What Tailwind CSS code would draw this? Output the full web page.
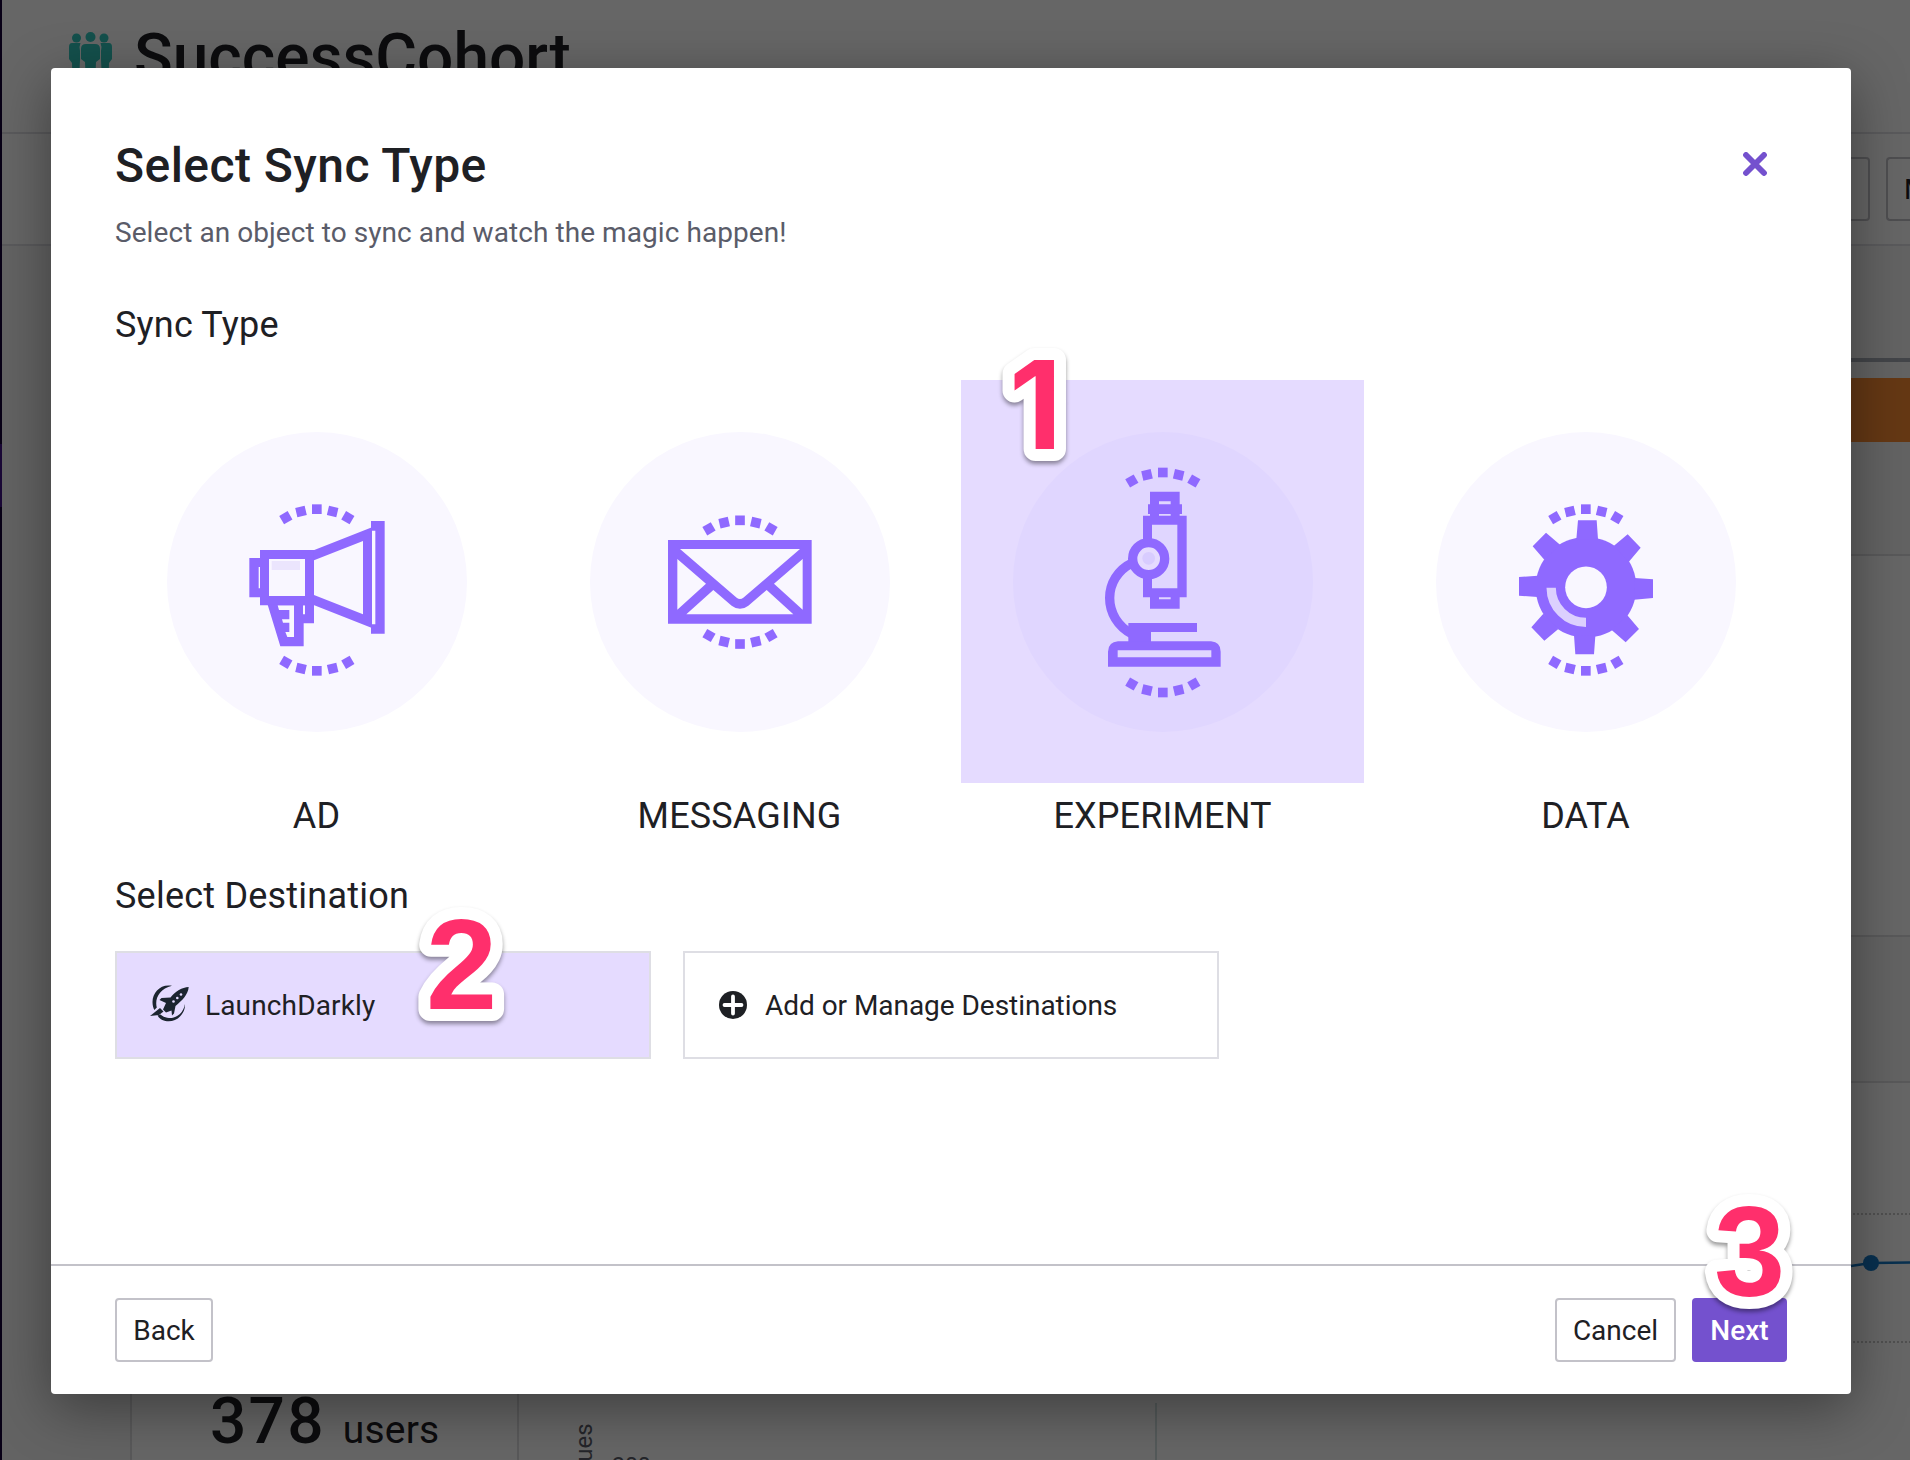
<!DOCTYPE html>
<html lang="en">
<head>
<meta charset="utf-8">
<title>Select Sync Type</title>
<script src="https://cdn.jsdelivr.net/npm/@tailwindcss/browser@4"></script>
</head>
<body class="relative h-[1460px] w-[1910px] overflow-hidden bg-[#f7f7f8] font-[Roboto,sans-serif] text-[#1e2024]">

<!-- Cohort page behind the dialog -->
<div class="flex h-[1460px]">
  <nav class="w-[2px] shrink-0 bg-[#140037] pt-[444px]"><div class="h-[63px] bg-[#421488]"></div></nav>
  <main class="flex min-w-0 flex-1 flex-col">
    <header class="flex h-[134px] shrink-0 items-start gap-[22px] border-b-2 border-[#e2e2e6] bg-white pl-[67px]">
      <svg class="mt-8 h-[52px] w-[43px] fill-[#32c8be]" viewBox="0 0 43 52">
        <circle cx="7.500" cy="6" r="4.500"/><circle cx="21.500" cy="5" r="5"/><circle cx="35" cy="6" r="4.500"/>
        <path d="M3 11h8.500q-1.500 3-.5 8v9l-1 20H3.500L3 31 0 27V15q0-4 3-4ZM31.500 11H40q3 0 3 4v12l-3 4-.5 17H33l-1-20v-9q1-5-.5-8ZM17 12h9q5 0 5 5v10l-4 3-1 22h-9l-1-22-4-3V17q0-5 5-5Z"/>
      </svg>
      <h1 class="mt-[22px] text-[64px] leading-[72px] font-medium">SuccessCohort</h1>
    </header>
    <div class="flex h-[112px] shrink-0 items-start justify-end gap-4 overflow-hidden border-b-2 border-[#e2e2e6] bg-white pt-[23px]">
      <div class="h-16 w-[120px] rounded border-2 border-[#c3c2c9]"></div>
      <div class="h-16 w-6 overflow-hidden rounded rounded-r-none border-2 border-r-0 border-[#c3c2c9] pl-4 text-[28px] leading-[61px]">More</div>
    </div>
    <div class="flex flex-1 flex-col pl-[128px]">
      <div class="mt-[112px] h-1 bg-[#a8acb6]"></div>
      <div class="mt-4 h-16 bg-[#fd8c32]"></div>
      <div class="mt-[112px] flex flex-1 flex-col border-t-2 border-l-2 border-[#dedee2] bg-white">
        <div class="h-[379px] shrink-0"></div>
        <div class="h-[148px] shrink-0 border-y-2 border-[#dedee2] bg-[#f7f7f8]"></div>
        <div class="flex flex-1">
          <div class="flex w-[387px] items-end border-r-2 border-[#dedee2] pb-[6px] pl-[78px]">
            <div class="flex items-baseline gap-[17px]"><span class="text-[64px] leading-[64px] font-medium tracking-[2.2px]">378</span><span class="text-[39px] leading-[44px] tracking-[0.2px]">users</span></div>
          </div>
          <div class="relative flex-1">
            <svg class="absolute inset-0 h-full w-full" viewBox="0 0 1391 377" preserveAspectRatio="xMinYMin slice">
              <path d="M1334 131H1391M1334 259H1391" stroke="#c8c8c8" stroke-width="2" stroke-dasharray="2 2"/>
              <path d="M637 320V377" stroke="#d2e0e2" stroke-width="2"/>
              <path d="M1325 184 1352 180 1391 179.500" stroke="#1478c6" stroke-width="2.500" fill="none"/>
              <circle cx="1352" cy="180" r="8" fill="#1478c6"/>
              <text transform="translate(73 427) rotate(-90)" font-size="24" fill="#5a5c69">Uniques</text>
              <text x="93" y="391" font-size="23" fill="#5a5c69">200</text>
            </svg>
          </div>
        </div>
      </div>
    </div>
  </main>
</div>

<!-- Overlay and dialog -->
<div class="absolute inset-0 bg-black/60 pt-[68px] pl-[51px]">
  <section class="flex h-[1326px] w-[1800px] flex-col rounded-[4px] bg-white shadow-[0_14px_56px_rgba(0,0,0,0.4)]">
    <div class="flex-1 px-16 pt-[70px]">
      <div class="flex items-start justify-between pr-5">
        <h2 class="text-[48px] leading-[56px] font-medium tracking-[0.45px]">Select Sync Type</h2>
        <svg class="mt-[14px] h-6 w-6" viewBox="0 0 24 24" fill="none" stroke="#7451ce" stroke-width="5.800" stroke-linecap="round"><path d="M3 3 21 21M21 3 3 21"/></svg>
      </div>
      <p class="mt-[19px] text-[28px] leading-10 tracking-[0.07px] text-[#5a5c69]">Select an object to sync and watch the magic happen!</p>
      <h3 class="mt-[48px] text-[36px] leading-[48px] tracking-[0.2px]">Sync Type</h3>

      <div class="mt-[31px] grid grid-cols-4 gap-5 text-center text-[36px] leading-[48px] tracking-[0.15px]">
        <div>
          <div class="flex h-[403px] items-center justify-center">
            <svg class="h-[300px] w-[300px]" viewBox="21 36 900 900" fill="#8f69ff">
              <defs>
                <g id="arc">
                  <rect x="-14.500" y="-14.500" width="29" height="29"/>
                  <rect x="-14.500" y="-14.500" width="29" height="29" transform="translate(-47.500 7) rotate(-13)"/>
                  <rect x="-14.500" y="-14.500" width="29" height="29" transform="translate(-93 25.500) rotate(-30)"/>
                  <rect x="-14.500" y="-14.500" width="29" height="29" transform="translate(47.500 7) rotate(13)"/>
                  <rect x="-14.500" y="-14.500" width="29" height="29" transform="translate(93 25.500) rotate(30)"/>
                </g>
              </defs>
              <circle cx="471" cy="486" r="450" fill="#f9f7ff"/>
              <use href="#arc" transform="translate(470.500 267.500)"/>
              <use href="#arc" transform="translate(470.500 752.500) scale(1 -1)"/>
              <path fill-rule="evenodd" d="M300 390H462V556H300ZM327 417V528H435V417Z"/>
              <path fill-rule="evenodd" d="M268 414H300V532H268ZM296 441V505H300V441Z"/>
              <path d="M335 423H420V450H335Z" fill="#ebe5fd"/>
              <path fill-rule="evenodd" d="M461 391 636 322V624L461 555ZM462 421V525L609 583V363Z"/>
              <path fill-rule="evenodd" d="M633 303H674V641H633ZM636 332V613H646V332Z"/>
              <path fill-rule="evenodd" d="M323 554 361 679H431V610H462V554ZM429 556V583H435V556ZM353 556H402V651H382L376 636H388V608H369L366 598H388V570H357Z"/>
            </svg>
          </div>
          <div class="mt-[9px]">AD</div>
        </div>
        <div>
          <div class="flex h-[403px] items-center justify-center">
            <svg class="h-[300px] w-[300px]" viewBox="30 36 900 900" fill="#8f69ff">
              <circle cx="480" cy="486" r="450" fill="#f9f7ff"/>
              <use href="#arc" transform="translate(480 301)"/>
              <use href="#arc" transform="translate(480 672) scale(1 -1)"/>
              <path fill-rule="evenodd" d="M264 360H695V611H264ZM300 387 470 533Q480 541 490 533L660 387ZM292 417V569L378 491ZM668 417 582 491 668 569ZM400 510 319 583H640L560 510 505 557Q480 576 455 557Z"/>
            </svg>
          </div>
          <div class="mt-[9px]">MESSAGING</div>
        </div>
        <div>
          <div class="flex h-[403px] items-center justify-center bg-[#e5dbff]">
            <svg class="h-[300px] w-[300px]" viewBox="189 275 900 900" fill="#8f69ff">
              <circle cx="639" cy="725" r="450" fill="#e0d6ff"/>
              <use href="#arc" transform="translate(638.500 396.500)"/>
              <use href="#arc" transform="translate(638.500 1056.500) scale(1 -1)"/>
              <path fill-rule="evenodd" d="M600 454H689V492H696V521H689V526H710V771H689V805H600V771H579V526H600V521H594V492H600ZM627 483V492H662V483ZM627 521V526H662V521ZM606 553V744H682V553ZM627 771V777H662V771Z"/>
              <path d="M548 667C456 710 456 835 548 882" fill="none" stroke="#8f69ff" stroke-width="28"/>
              <circle cx="596" cy="655" r="48" fill="#e5dbff" stroke="#8f69ff" stroke-width="28"/>
              <circle cx="596" cy="654" r="19" fill="#d8ccff"/>
              <path d="M535 848H741V875H603V905H535Z"/>
              <path fill-rule="evenodd" d="M504 903H783Q812 905 812 934V979H474V934Q475 905 504 903ZM503 930V951H784V930Z"/>
            </svg>
          </div>
          <div class="mt-[9px]">EXPERIMENT</div>
        </div>
        <div>
          <div class="flex h-[403px] items-center justify-center">
            <svg class="h-[300px] w-[300px]" viewBox="18 36 900 900" fill="#8f69ff">
              <circle cx="468" cy="486" r="450" fill="#f9f7ff"/>
              <use href="#arc" transform="translate(467.500 267.500)"/>
              <use href="#arc" transform="translate(467.500 752.500) scale(1 -1)"/>
              <circle cx="468" cy="502" r="151"/>
              <path d="M444 301H500L504 358H439ZM669 478V534L612 539 614 474ZM432 646 496 648 492 703H436ZM267 471 323 467V531L267 527ZM593 343 632 383 596 426 551 378ZM348 338 391 375 343 419 308 379ZM304 622 340 581 385 627 343 662ZM587 667 627 627 592 586 545 630Z"/>
              <circle cx="468" cy="502" r="62.500" fill="#f9f7ff"/>
              <path d="M363.500 503A104.500 104.500 0 0 0 468 607" fill="none" stroke="#dcd0fe" stroke-width="28"/>
            </svg>
          </div>
          <div class="mt-[9px]">DATA</div>
        </div>
      </div>

      <h3 class="mt-8 text-[36px] leading-[48px] tracking-[0.22px]">Select Destination</h3>
      <div class="mt-[31px] flex gap-8 text-[28px]">
        <div class="flex h-[108px] w-[536px] items-center border-2 border-[#dedee4] bg-[#e5dbff] pl-[33px]">
          <svg class="mb-[3px] h-[37px] w-[39px]" viewBox="0 0 39 37" fill="#1c2530">
            <path d="M22 .8C11 -1.500 2.500 7 2.500 17c0 3 .8 6 1.800 8l2.500-2.500C4.500 14 9 4 22 .8ZM7.500 30.500C12 38.500 28 39.500 34 25.500c.8-2 1.200-4.500 1-6.500-1.500 9-8.500 14.500-16 14-3.500-.2-6.500-1.500-8.500-3.500Z"/>
            <path d="M38.700 2C32 2.500 25.500 6 20.500 12.500L11.500 13l-2 2 6.500 3-3 6.500 3 3 5.500-2 .5 5 2-2 1.500-7.500C32 15.500 38 10 38.700 2Z"/>
            <path d="M10 23 13.500 26.500 9 30 0 31Z"/>
            <g fill="#e5dbff"><circle cx="31" cy="9.500" r="1.300"/><circle cx="27.300" cy="13" r="1.300"/><circle cx="23.500" cy="16.500" r="1.300"/></g>
          </svg>
          <span class="ml-4 pt-[2px] tracking-[0.15px]">LaunchDarkly</span>
        </div>
        <div class="flex h-[108px] w-[536px] items-center border-2 border-[#dedee4] pl-[34px]">
          <svg class="h-7 w-7" viewBox="0 0 28 28"><circle cx="14" cy="14" r="14" fill="#1e2024"/><path d="M14 5.500V22.500M5.500 14H22.500" stroke="#fff" stroke-width="3.800" stroke-linecap="round"/></svg>
          <span class="ml-[18px] pt-[2px] tracking-[-0.04px]">Add or Manage Destinations</span>
        </div>
      </div>
    </div>

    <footer class="flex h-[130px] items-center justify-between border-t-2 border-[#c3c2c9] px-16 pb-px text-[28px]">
      <button class="h-16 w-[98px] rounded border-2 border-[#c3c2c9] pt-[2px]">Back</button>
      <div class="flex gap-4">
        <button class="h-16 w-[121px] rounded border-2 border-[#c3c2c9] pt-[2px]">Cancel</button>
        <button class="h-16 w-[95px] rounded bg-[#7451ce] pt-[2px] font-medium text-white">Next</button>
      </div>
    </footer>
  </section>
</div>

<!-- Step number markers -->
<svg class="absolute top-[330px] left-[980px] h-[150px] w-[110px] overflow-visible drop-shadow-[0_3px_2px_rgba(0,0,0,0.4)]" viewBox="0 0 110 150"><text x="29" y="119" class="fill-[#ff2f6c] stroke-white font-[Inter] text-[123px] font-bold [paint-order:stroke]" stroke-width="24" stroke-linejoin="round">1</text></svg>
<svg class="absolute top-[890px] left-[401px] h-[150px] w-[110px] overflow-visible drop-shadow-[0_3px_2px_rgba(0,0,0,0.4)]" viewBox="0 0 110 150"><text x="25" y="119" class="fill-[#ff2f6c] stroke-white font-['Liberation_Sans'] text-[128px] font-bold [paint-order:stroke]" stroke-width="24" stroke-linejoin="round">2</text></svg>
<svg class="absolute top-[1177px] left-[1690px] h-[150px] w-[110px] overflow-visible drop-shadow-[0_3px_2px_rgba(0,0,0,0.4)]" viewBox="0 0 110 150"><text x="24" y="119" class="fill-[#ff2f6c] stroke-white font-['Liberation_Sans'] text-[128px] font-bold [paint-order:stroke]" stroke-width="24" stroke-linejoin="round">3</text></svg>
</body>
</html>
